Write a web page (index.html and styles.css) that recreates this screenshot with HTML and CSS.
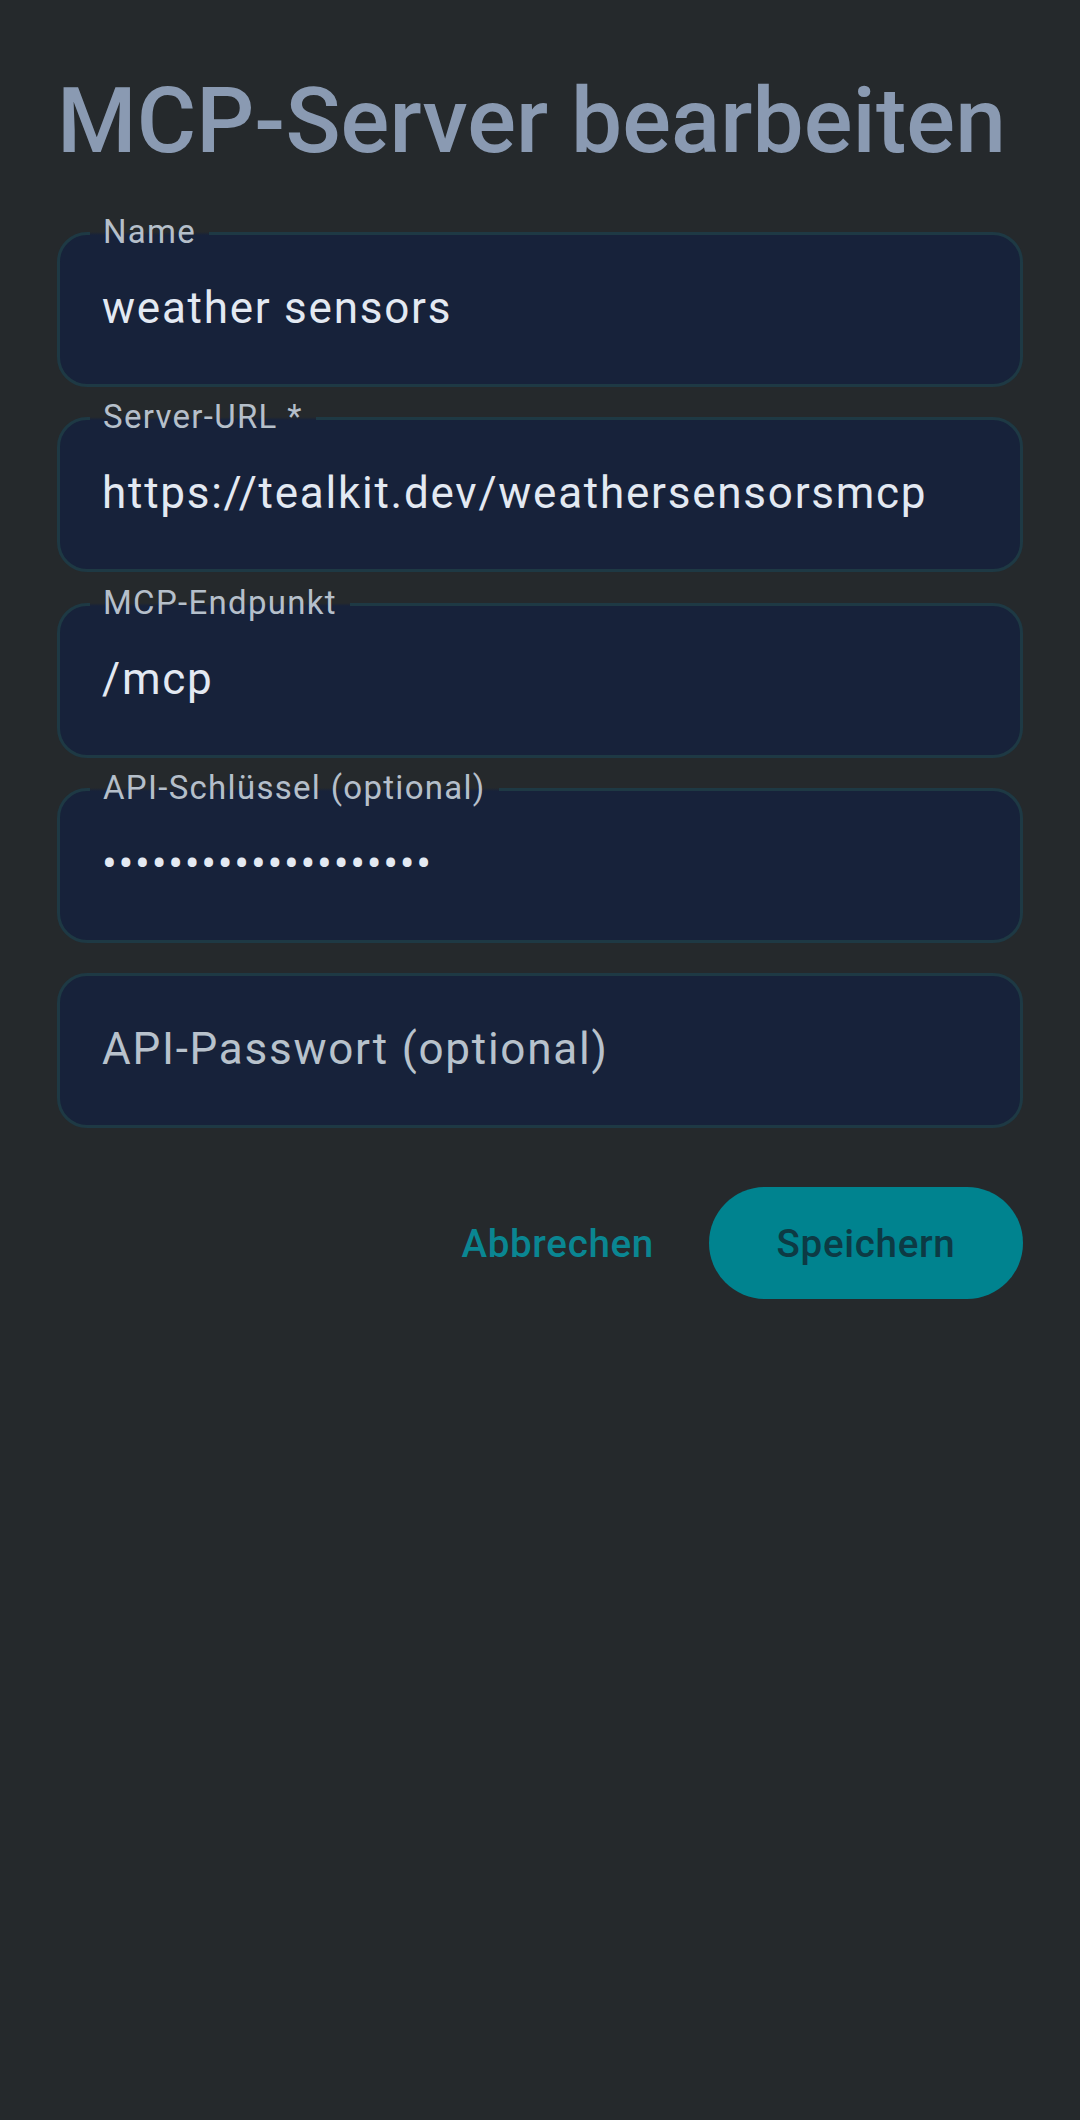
FILE: index.html
```html
<!DOCTYPE html>
<html lang="de">
<head>
<meta charset="utf-8">
<title>MCP-Server bearbeiten</title>
<link rel="stylesheet" href="styles.css">
</head>
<body>
<main class="screen">
  <h1 class="title">MCP-Server bearbeiten</h1>
  <form class="form">
    <div class="field">
      <span class="field-label">Name</span>
      <span class="field-value">weather sensors</span>
    </div>
    <div class="field">
      <span class="field-label">Server-URL *</span>
      <span class="field-value">https://tealkit.dev/weathersensorsmcp</span>
    </div>
    <div class="field">
      <span class="field-label">MCP-Endpunkt</span>
      <span class="field-value">/mcp</span>
    </div>
    <div class="field">
      <span class="field-label">API-Schlüssel (optional)</span>
      <span class="field-value dots">••••••••••••••••••••</span>
    </div>
    <div class="field">
      <span class="field-value placeholder">API-Passwort (optional)</span>
    </div>
    <div class="actions">
      <button type="button" class="btn-text">Abbrechen</button>
      <button type="button" class="btn-filled">Speichern</button>
    </div>
  </form>
</main>
</body>
</html>
```
FILE: styles.css
```css
html, body {
  margin: 0;
  padding: 0;
  background: #25292c;
}
body {
  width: 1080px;
  height: 2120px;
  font-family: Roboto, "Noto Sans", sans-serif;
}
.screen {
  padding: 68px 57px 0 57px;
}
.title {
  margin: 0;
  font-size: 91px;
  font-weight: 500;
  line-height: normal;
  color: #8a9ab2;
  letter-spacing: 0.1px;
}
.form {
  margin-top: 58px;
  display: flex;
  flex-direction: column;
  gap: 30.25px;
}
.field {
  position: relative;
  box-sizing: border-box;
  height: 155px;
  border: 3px solid #1e3944;
  border-radius: 30px;
  background: #17223a;
  display: flex;
  align-items: center;
  padding: 0 42px 3px;
}
.field-label {
  position: absolute;
  top: -25px;
  left: 30px;
  padding: 0 13px;
  font-size: 33px;
  line-height: 44px;
  color: #b5bfca;
  letter-spacing: 1.3px;
  background: linear-gradient(to bottom, #25292c 0, #25292c 22px, #17223a 25px, #17223a 100%);
}
.field-value {
  font-size: 44px;
  color: #e3e9f2;
  letter-spacing: 1.75px;
  white-space: nowrap;
}
.dots {
  letter-spacing: 1.7px;
}
.placeholder {
  color: #b8c2cc;
}
.actions {
  margin-top: 29px;
  display: flex;
  justify-content: flex-end;
  align-items: center;
  gap: 22px;
}
.btn-text, .btn-filled {
  font-family: Roboto, "Noto Sans", sans-serif;
  font-size: 38.5px;
  font-weight: 500;
  letter-spacing: 0.7px;
  border: none;
  height: 112px;
  border-radius: 56px;
  cursor: pointer;
}
.btn-text {
  background: transparent;
  color: #0a8692;
  padding: 0 33px;
}
.btn-filled {
  background: #00838f;
  color: #0d3a44;
  padding: 0 60px;
  width: 314px;
}
```
